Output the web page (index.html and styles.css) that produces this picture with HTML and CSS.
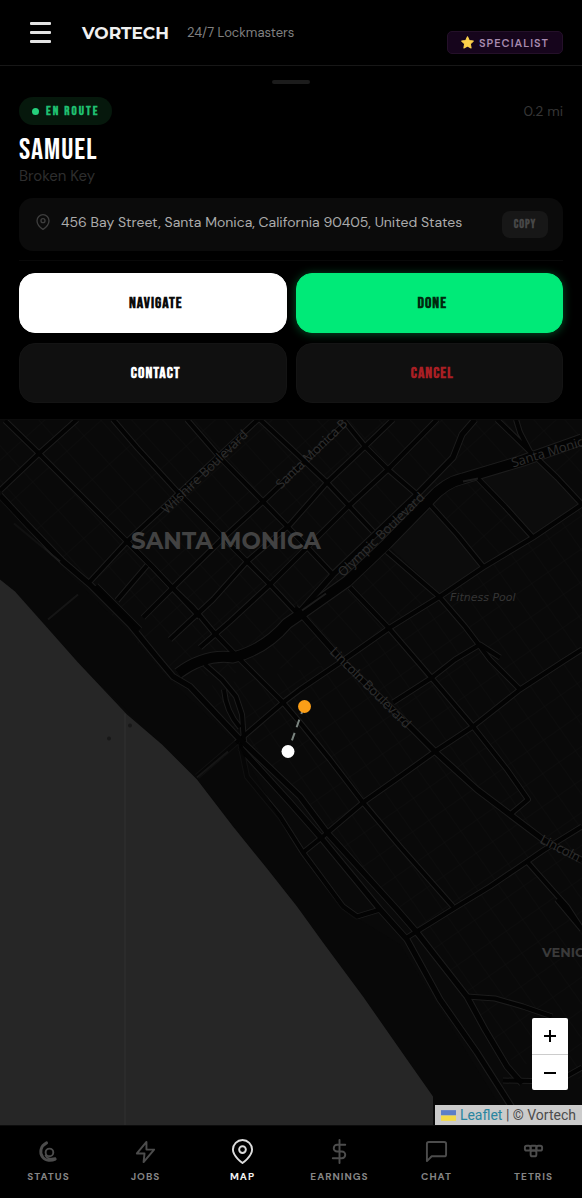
FILE: index.html
```html
<!DOCTYPE html>
<html lang="en">
<head>
<meta charset="utf-8">
<meta name="viewport" content="width=device-width, initial-scale=1">
<title>Vortech</title>
<link rel="stylesheet" href="styles.css">
</head>
<body class="app">
<header class="topbar">
  <button class="menu" type="button" aria-label="Menu"><span class="menu-bar"></span><span class="menu-bar"></span><span class="menu-bar"></span></button>
  <span class="brand">VORTECH</span>
  <span class="tagline">24/7 Lockmasters</span>
  <span class="role">
    <svg class="role-star" viewBox="0 0 24 24" aria-hidden="true"><path d="M12 1.5l3.2 6.9 7.5.9-5.5 5.2 1.4 7.5L12 18.3 5.400 22l1.400-7.500L1.300 9.300l7.500-.900z" fill="#fbd04b" stroke="#fbd04b" stroke-width="2" stroke-linejoin="round"/></svg>
    SPECIALIST
  </span>
</header>

<section class="job">
  <div class="handle"></div>
  <div class="job-top">
    <span class="state"><span class="state-dot"></span>EN ROUTE</span>
    <span class="distance">0.2 mi</span>
  </div>
  <h1 class="customer">SAMUEL</h1>
  <p class="issue">Broken Key</p>
  <div class="address">
    <svg class="address-pin" viewBox="0 0 24 24" aria-hidden="true"><path d="M21 10c0 7-9 13-9 13s-9-6-9-13a9 9 0 0 1 18 0z"/><circle cx="12" cy="10" r="3"/></svg>
    <span class="address-text">456 Bay Street, Santa Monica, California 90405, United States</span>
    <button class="copy" type="button">COPY</button>
  </div>
  <div class="actions">
    <button class="action action-navigate" type="button">NAVIGATE</button>
    <button class="action action-done" type="button">DONE</button>
    <button class="action" type="button">CONTACT</button>
    <button class="action action-cancel" type="button">CANCEL</button>
  </div>
</section>

<main class="map">
  <svg class="map-canvas" viewBox="0 420 582 706" preserveAspectRatio="xMidYMid slice" role="img" aria-label="Map of Santa Monica">
    <defs>
      <pattern id="blocks-north" width="23" height="38" patternUnits="userSpaceOnUse" patternTransform="rotate(-42)"><path class="lane" d="M0 0H23M0 0V38"/></pattern>
      <pattern id="blocks-south" width="20" height="27" patternUnits="userSpaceOnUse" patternTransform="rotate(-35)"><path class="lane" d="M0 0H20M0 0V27"/></pattern>
      <g id="streets">
        <path d="M5 421L39 454L127 542L153 568L172 588L193 608L213 632L240 660L283 703L300 723L330 760L363 803L400 847L453 907"/>
        <path d="M0 491L39 454L77 420"/>
        <path d="M113 420L137 448L180 495L203 518L247 562L270 585L300 617"/>
        <path d="M187 420L220 458L263 502L300 540L333 575"/>
        <path d="M258 420L167 505L127 542L90 582"/>
        <path d="M347 422L263 502L227 535L183 578L143 618"/>
        <path d="M260 420L290 448L327 483L373 532"/>
        <path d="M147 566L117 601M170 640L213 600L247 562L290 525L327 483L365 447L393 420"/>
        <path d="M200 648L230 622L270 585L300 555L347 508L388 470L437 420"/>
        <path d="M343 420L365 447L388 470L417 495"/>
        <path d="M430 505L457 535L483 567M477 478L505 507L533 538"/>
        <path d="M497 420L530 452L557 478L582 505M516 420L520 433L530 452"/>
        <path d="M197 777L240 740L283 703L300 690L340 663L390 628L440 597L483 568L533 538L582 505"/>
        <path d="M387 552L440 598L465 627L490 660L520 690"/>
        <path d="M350 588L390 630L433 680L473 727L507 770L528 800L510 815"/>
        <path d="M303 853L323 837L363 803L400 777L435 752L473 727L520 690L563 662L582 650"/>
        <path d="M393 703L432 678L455 660L480 645L500 658"/>
        <path d="M407 938L457 907L490 887L527 862L543 851L582 827"/>
        <path d="M527 862L550 888L567 907L582 930M557 900L582 930"/>
        <path d="M240 743L247 777L280 817L303 853L343 907L357 917L380 910"/>
        <path d="M205 665L222 680L236 697L242 715L244 742M224 690Q226 712 240 728"/>
        <path d="M467 997L495 999L523 1007L552 1017M503 1081L557 1082L582 1068"/>
        <path d="M127 542L153 568L200 618M96 586L140 630"/>
      </g>
      <g id="coast-roads">
        <path d="M0 496L28 526L63 562L90 585L130 625L157 658L173 677L190 687L240 740L300 797L327 833L397 910L417 933L467 997L485 1030L507 1067L522 1084"/>
        <path d="M240 748L290 803L320 837L380 910L407 940L440 1000L477 1053L512 1108"/>
        <path d="M300 612L333 575L373 537L417 495L453 458L462 435L475 420"/>
        <path d="M295 608L343 662L413 730L435 752L477 790L510 815L543 840L582 861"/>
      </g>
      <g id="freeway"><path d="M178 674Q205 654 233 658Q265 650 287 624L303 613L347 582L387 544L430 500Q445 483 463 479L523 461L582 440"/></g>
    </defs>
    <rect class="land" y="420" width="582" height="706"/>
    <path fill="url(#blocks-north)" d="M0 420H582V505L340 663L170 680L0 491z"/>
    <path fill="url(#blocks-south)" d="M190 690L340 663L582 505V1080L510 1060L410 930L303 797z"/>
    <path class="parcel" d="M388 546L430 507L483 567L440 595zM477 478L530 455L580 503L534 536z"/>
    <use href="#streets" class="casing casing-street"/>
    <use href="#coast-roads" class="casing casing-coast"/>
    <use href="#freeway" class="casing casing-freeway"/>
    <use href="#streets" class="road road-street"/>
    <use href="#coast-roads" class="road road-coast"/>
    <use href="#freeway" class="road road-freeway"/>
    <path class="ramp" d="M302 611L326 594M14 524L60 562M463 482L478 479"/>
    <path class="beach" d="M0 500L60 566L128 632L165 676L238 745L300 856L343 910L400 945L512 1126H433L297 907L197 780L78 663L0 580z"/>
    <path class="pier" d="M48 620L78 595M197 778L228 752"/>
    <path class="water" d="M0 580L15 592L47 628L78 663L127 715L162 745L197 780L233 827L267 869L297 907L323 943L363 997L407 1060L433 1097V1126H0z"/>
    <path class="seam" d="M125 714V1126"/>
    <circle class="rock" cx="109" cy="739" r="2"/><circle class="rock" cx="130" cy="726" r="2"/>
    <g class="street-names">
      <text transform="translate(167 515) rotate(-44)">Wilshire Boulevard</text>
      <text transform="translate(281 490) rotate(-44)">Santa Monica B</text>
      <text transform="translate(343 578) rotate(-44)">Olympic Boulevard</text>
      <text transform="translate(513 468) rotate(-17)">Santa Monica</text>
      <text transform="translate(329 653) rotate(45)">Lincoln Boulevard</text>
      <text transform="translate(539 843) rotate(27)">Lincoln</text>
    </g>
    <text class="place" x="450" y="601">Fitness Pool</text>
    <text class="city" x="131" y="549">SANTA MONICA</text>
    <text class="district" x="542" y="957">VENICE</text>
    <path class="route" d="M304 707L288 752"/>
    <circle cx="304.500" cy="707" r="6.500" fill="#fb9e17"/>
    <circle cx="288" cy="752" r="6.500" fill="#fff"/>
  </svg>
  <div class="zoom">
    <button class="zoom-button" type="button" aria-label="Zoom in"><svg viewBox="0 0 14 14" aria-hidden="true"><path d="M1 7h12M7 1v12"/></svg></button>
    <button class="zoom-button" type="button" aria-label="Zoom out"><svg viewBox="0 0 14 14" aria-hidden="true"><path d="M1 7h12"/></svg></button>
  </div>
  <div class="credit">
    <svg class="flag" viewBox="0 0 14 10" aria-hidden="true"><path fill="#5c7fc7" d="M0 0h14v5H0z"/><path fill="#f2da48" d="M0 5h14v5H0z"/></svg>
    <span><a class="credit-link" href="#">Leaflet</a> | © Vortech</span>
  </div>
</main>

<nav class="tabs">
  <a class="tab" href="#"><svg viewBox="0 0 24 24" aria-hidden="true"><path stroke-width="3" d="M10 3C4 6 2 13 6 18c3 4 9 4 13 2"/><circle cx="13" cy="13" r="4"/><path d="M9 16c2 4 6 4 10 3"/></svg>STATUS</a>
  <a class="tab" href="#"><svg viewBox="0 0 24 24" aria-hidden="true"><path d="M13 2L3 14h8l-1 9 11-13h-8z"/></svg>JOBS</a>
  <a class="tab tab-active" href="#" aria-current="page"><svg viewBox="0 0 24 24" aria-hidden="true"><path d="M22 10c0 7-10 14-10 14S2 17 2 10a10 10 0 0 1 20 0z"/><circle cx="12" cy="10" r="3.500"/></svg>MAP</a>
  <a class="tab" href="#"><svg viewBox="0 0 24 24" aria-hidden="true"><path d="M12 0v24M18 5H9.500a3.500 3.500 0 0 0 0 7h5a3.500 3.500 0 0 1 0 7H5"/></svg>EARNINGS</a>
  <a class="tab" href="#"><svg viewBox="0 0 24 24" aria-hidden="true"><path d="M22 15a2 2 0 0 1-2 2H7l-5 5V4a2 2 0 0 1 2-2h16a2 2 0 0 1 2 2z"/></svg>CHAT</a>
  <a class="tab" href="#"><svg viewBox="0 0 24 24" aria-hidden="true"><rect x="3" y="6" width="6" height="5" rx="2"/><rect x="9" y="6" width="6" height="5" rx="1"/><rect x="15" y="6" width="6" height="5" rx="2"/><rect x="9" y="11" width="6" height="6" rx="2"/></svg>TETRIS</a>
</nav>
</body>
</html>
```
FILE: styles.css
```css
*, *::before, *::after { box-sizing: border-box; }

.app {
  margin: 0;
  min-height: 100vh;
  display: flex;
  flex-direction: column;
  background: #000;
  color: #fff;
  font-family: "DM Sans", Inter, "Liberation Sans", sans-serif;
}

button { font: inherit; color: inherit; border: 0; padding: 0; background: none; cursor: pointer; }

.topbar {
  display: flex;
  align-items: center;
  height: 66px;
  padding: 0 19px 0 30px;
  border-bottom: 1px solid #171717;
}
.menu { display: flex; flex-direction: column; gap: 6px; width: 21px; margin-right: 31px; }
.menu-bar { height: 3px; border-radius: 1px; background: #e4e4e4; }
.brand { font-family: Montserrat, Inter, sans-serif; font-size: 17px; font-weight: 700; color: #f0f0f0; margin-right: 18px; }
.tagline { font-size: 13px; color: #808080; white-space: nowrap; }
.role {
  display: flex;
  align-items: center;
  gap: 5px;
  align-self: flex-end;
  margin: 0 0 11px auto;
  padding: 0 13px;
  height: 23px;
  border: 1px solid #241029;
  border-radius: 5px;
  background: #16051c;
  color: #a88bb0;
  font-size: 11px;
  font-weight: 600;
  letter-spacing: 1px;
}
.role-star { width: 13px; height: 13px; }

.job { padding: 14px 19px 16px; border-bottom: 1px solid #0c0c0c; }
.handle { width: 38px; height: 4px; margin: 0 auto; border-radius: 2px; background: #1c1c1c; }
.job-top { display: flex; align-items: center; justify-content: space-between; margin-top: 13px; }
.state, .customer, .copy, .action {
  font-family: "Bebas Neue", "Roboto Condensed", "Liberation Sans Narrow", "DejaVu Sans Condensed", sans-serif;
  font-weight: 700;
  letter-spacing: 1px;
}
.state {
  display: flex;
  align-items: center;
  gap: 7px;
  height: 28px;
  padding: 0 13px;
  border-radius: 14px;
  background: #06180c;
  color: #1fbf70;
  font-size: 13px;
  letter-spacing: 2px;
}
.state-dot { width: 7px; height: 7px; border-radius: 50%; background: #25d07c; }
.distance { font-size: 14px; color: #363636; }
.customer {
  margin: 8px 0 0;
  font-size: 30px;
  line-height: 34px;
  font-weight: 400;
}
.issue { margin: 0; font-size: 15px; line-height: 18px; color: #2e2e2e; }
.address {
  display: flex;
  align-items: center;
  gap: 10px;
  min-height: 53px;
  margin-top: 13px;
  padding: 0 15px 0 16px;
  border-radius: 14px;
  background: #0b0b0b;
}
.address-pin { flex: none; width: 16px; height: 16px; margin-bottom: 5px; fill: none; stroke: #3e3e3e; stroke-width: 2; }
.address-text { flex: 1; padding-bottom: 6px; font-size: 14px; color: #ababab; }
.copy {
  width: 46px;
  height: 27px;
  border-radius: 8px;
  background: #171717;
  color: #474747;
  font-size: 12px;
}
.actions {
  display: grid;
  grid-template-columns: 1fr 1fr;
  gap: 10px 9px;
  margin-top: 9px;
  padding-top: 12px;
  border-top: 1px solid #090909;
}
.action {
  height: 60px;
  padding-left: 6px;
  border-radius: 16px;
  border: 1px solid #141414;
  background: #101010;
  font-size: 16px;
}
.action-navigate { background: #fff; border-color: #fff; color: #0c0c0c; }
.action-done { background: #00ea78; border-color: #00ea78; color: #00290f; box-shadow: 0 1px 10px #00883f99; }
.action-cancel { color: #a91f24; }

.map { position: relative; flex: 1; min-height: 320px; overflow: hidden; background: #090909; }
.map-canvas { position: absolute; inset: 0; width: 100%; height: 100%; }
.land { fill: #090909; }
.lane { fill: none; stroke: #101010; stroke-width: 1; }
.parcel { fill: #0c0c0c; }
.casing, .road { fill: none; stroke-linejoin: round; }
.casing { stroke: #1c1c1c; }
.casing-street { stroke-width: 6px; }
.casing-coast { stroke-width: 7px; }
.casing-freeway { stroke-width: 12px; }
.road { stroke: #030303; }
.road-street { stroke-width: 4px; }
.road-coast { stroke-width: 5px; }
.road-freeway { stroke-width: 10px; }
.ramp { fill: none; stroke: #1c1c1c; stroke-width: 2; }
.beach { fill: #080808; fill-opacity: .6; }
.pier { fill: none; stroke: #151515; stroke-width: 2; }
.water { fill: #262626; }
.seam { stroke: #303030; stroke-width: 1; }
.rock { fill: #181818; }
.street-names { fill: #2e2e2e; font-family: "Open Sans", "Noto Sans", sans-serif; font-size: 13px; }
.place { fill: #353535; font-family: "DejaVu Sans", sans-serif; font-size: 11px; font-style: italic; }
.city { fill: #424242; font-family: Montserrat, Inter, sans-serif; font-size: 23px; font-weight: 700; }
.district { fill: #3a3a3a; font-family: Montserrat, Inter, sans-serif; font-size: 13px; font-weight: 700; }
.route { stroke: #7b8580; stroke-width: 2; stroke-dasharray: 8 6; }

.zoom {
  position: absolute;
  right: 14px;
  bottom: 35px;
  width: 36px;
  border-radius: 2px;
  background: #fff;
  overflow: hidden;
}
.zoom-button { display: grid; place-items: center; width: 100%; height: 36px; }
.zoom-button + .zoom-button { border-top: 1px solid #ccc; }
.zoom-button svg { width: 14px; height: 14px; stroke: #000; stroke-width: 2; }
.credit {
  position: absolute;
  right: 0;
  bottom: 0;
  display: flex;
  align-items: center;
  gap: 4px;
  height: 20px;
  padding: 0 6px;
  background: #cbcbcb;
  color: #4c4c4c;
  font-family: Roboto, sans-serif;
  font-size: 14px;
}
.flag { width: 15px; height: 11px; }
.credit-link { color: #2985a0; text-decoration: none; }

.tabs {
  display: grid;
  grid-template-columns: repeat(6, 1fr);
  height: 73px;
  border-top: 1px solid #0c0c0c;
}
.tab {
  display: flex;
  flex-direction: column;
  align-items: center;
  gap: 7px;
  padding-top: 14px;
  color: #858585;
  font-size: 10px;
  line-height: 14px;
  font-weight: 700;
  letter-spacing: 1px;
  text-decoration: none;
}
.tab svg { width: 23px; height: 23px; fill: none; stroke: #4c4c4c; stroke-width: 2; stroke-linecap: round; stroke-linejoin: round; overflow: visible; }
.tab-active { color: #f2f2f2; }
.tab-active svg { stroke: #dcdcdc; }
```
